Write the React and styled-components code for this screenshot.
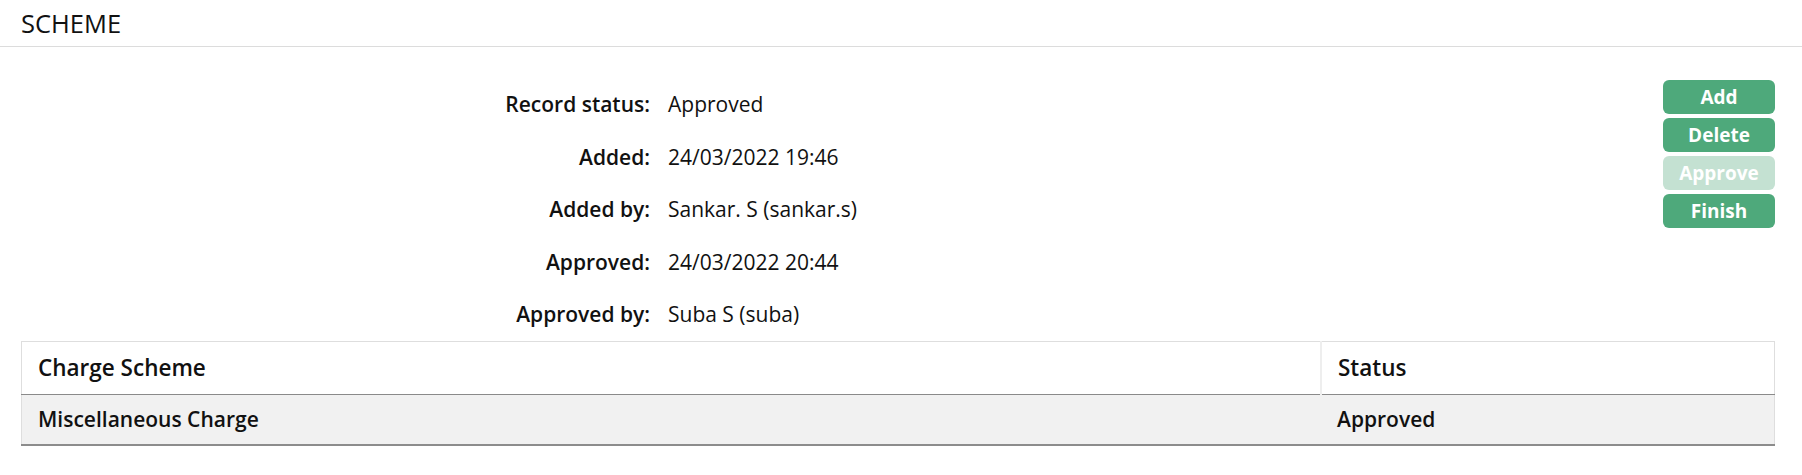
import React from "react";
import styled, { createGlobalStyle } from "styled-components";

const Global = createGlobalStyle`
  html, body { margin: 0; padding: 0; background: #fff; }
  body { font-family: "Open Sans", "Noto Sans", sans-serif; color: #111; }
`;

const Page = styled.div`
  width: 1802px;
`;

const TitleBar = styled.div`
  height: 46px;
  border-bottom: 1px solid #dcdcdc;
  padding: 0 21px;
  display: flex;
  align-items: center;
`;

const Title = styled.h1`
  margin: 0;
  font-size: 25.5px;
  font-weight: 400;
  letter-spacing: 0;
  color: #111;
`;

const Body = styled.div`
  padding: 0 27px 0 21px;
`;

const Top = styled.div`
  display: flex;
  justify-content: space-between;
  align-items: flex-start;
`;

const Fields = styled.dl`
  margin: 0;
  padding-top: 43px;
  display: grid;
  grid-template-columns: 629px auto;
  column-gap: 18px;
  row-gap: 0;
`;

const Label = styled.dt`
  margin: 0;
  text-align: right;
  font-size: 21px;
  font-weight: 600;
  height: 52.5px;
  line-height: 28px;
`;

const Value = styled.dd`
  margin: 0;
  font-size: 21px;
  font-weight: 400;
  height: 52.5px;
  line-height: 28px;
`;

const Actions = styled.div`
  padding-top: 33px;
  display: flex;
  flex-direction: column;
  gap: 4px;
  width: 112px;
`;

const Button = styled.button`
  height: 34px;
  border: none;
  border-radius: 6px;
  background: ${(p) => (p.disabled ? "#c4e1d2" : "#4ea97b")};
  color: #fff;
  font-family: inherit;
  font-size: 19px;
  font-weight: 700;
  padding: 0;
  cursor: ${(p) => (p.disabled ? "default" : "pointer")};
`;

const Table = styled.table`
  margin-top: -12px;
  width: 100%;
  border-collapse: collapse;
  border: 1px solid #dedede;
  border-bottom: none;
`;

const Th = styled.th`
  text-align: left;
  font-size: 22.5px;
  font-weight: 600;
  height: 52px;
  padding: 0 16px;
  border-bottom: 1px solid #8a8a8a;
  border-left: ${(p) => (p.divider ? "2px solid #eeeeee" : "none")};
  width: ${(p) => p.w || "auto"};
`;

const Td = styled.td`
  font-size: 21px;
  font-weight: 600;
  height: 49px;
  padding: 0 16px;
  background: #f1f1f1;
  border-bottom: 2px solid #8c8c8c;
`;

const fields = [
  ["Record status:", "Approved"],
  ["Added:", "24/03/2022 19:46"],
  ["Added by:", "Sankar. S (sankar.s)"],
  ["Approved:", "24/03/2022 20:44"],
  ["Approved by:", "Suba S (suba)"],
];

export default function App() {
  return (
    <Page>
      <Global />
      <TitleBar>
        <Title>SCHEME</Title>
      </TitleBar>
      <Body>
        <Top>
          <Fields>
            {fields.map(([l, v]) => (
              <React.Fragment key={l}>
                <Label>{l}</Label>
                <Value>{v}</Value>
              </React.Fragment>
            ))}
          </Fields>
          <Actions>
            <Button>Add</Button>
            <Button>Delete</Button>
            <Button disabled>Approve</Button>
            <Button>Finish</Button>
          </Actions>
        </Top>
        <Table>
          <thead>
            <tr>
              <Th>Charge Scheme</Th>
              <Th divider w="420px">Status</Th>
            </tr>
          </thead>
          <tbody>
            <tr>
              <Td>Miscellaneous Charge</Td>
              <Td>Approved</Td>
            </tr>
          </tbody>
        </Table>
      </Body>
    </Page>
  );
}
